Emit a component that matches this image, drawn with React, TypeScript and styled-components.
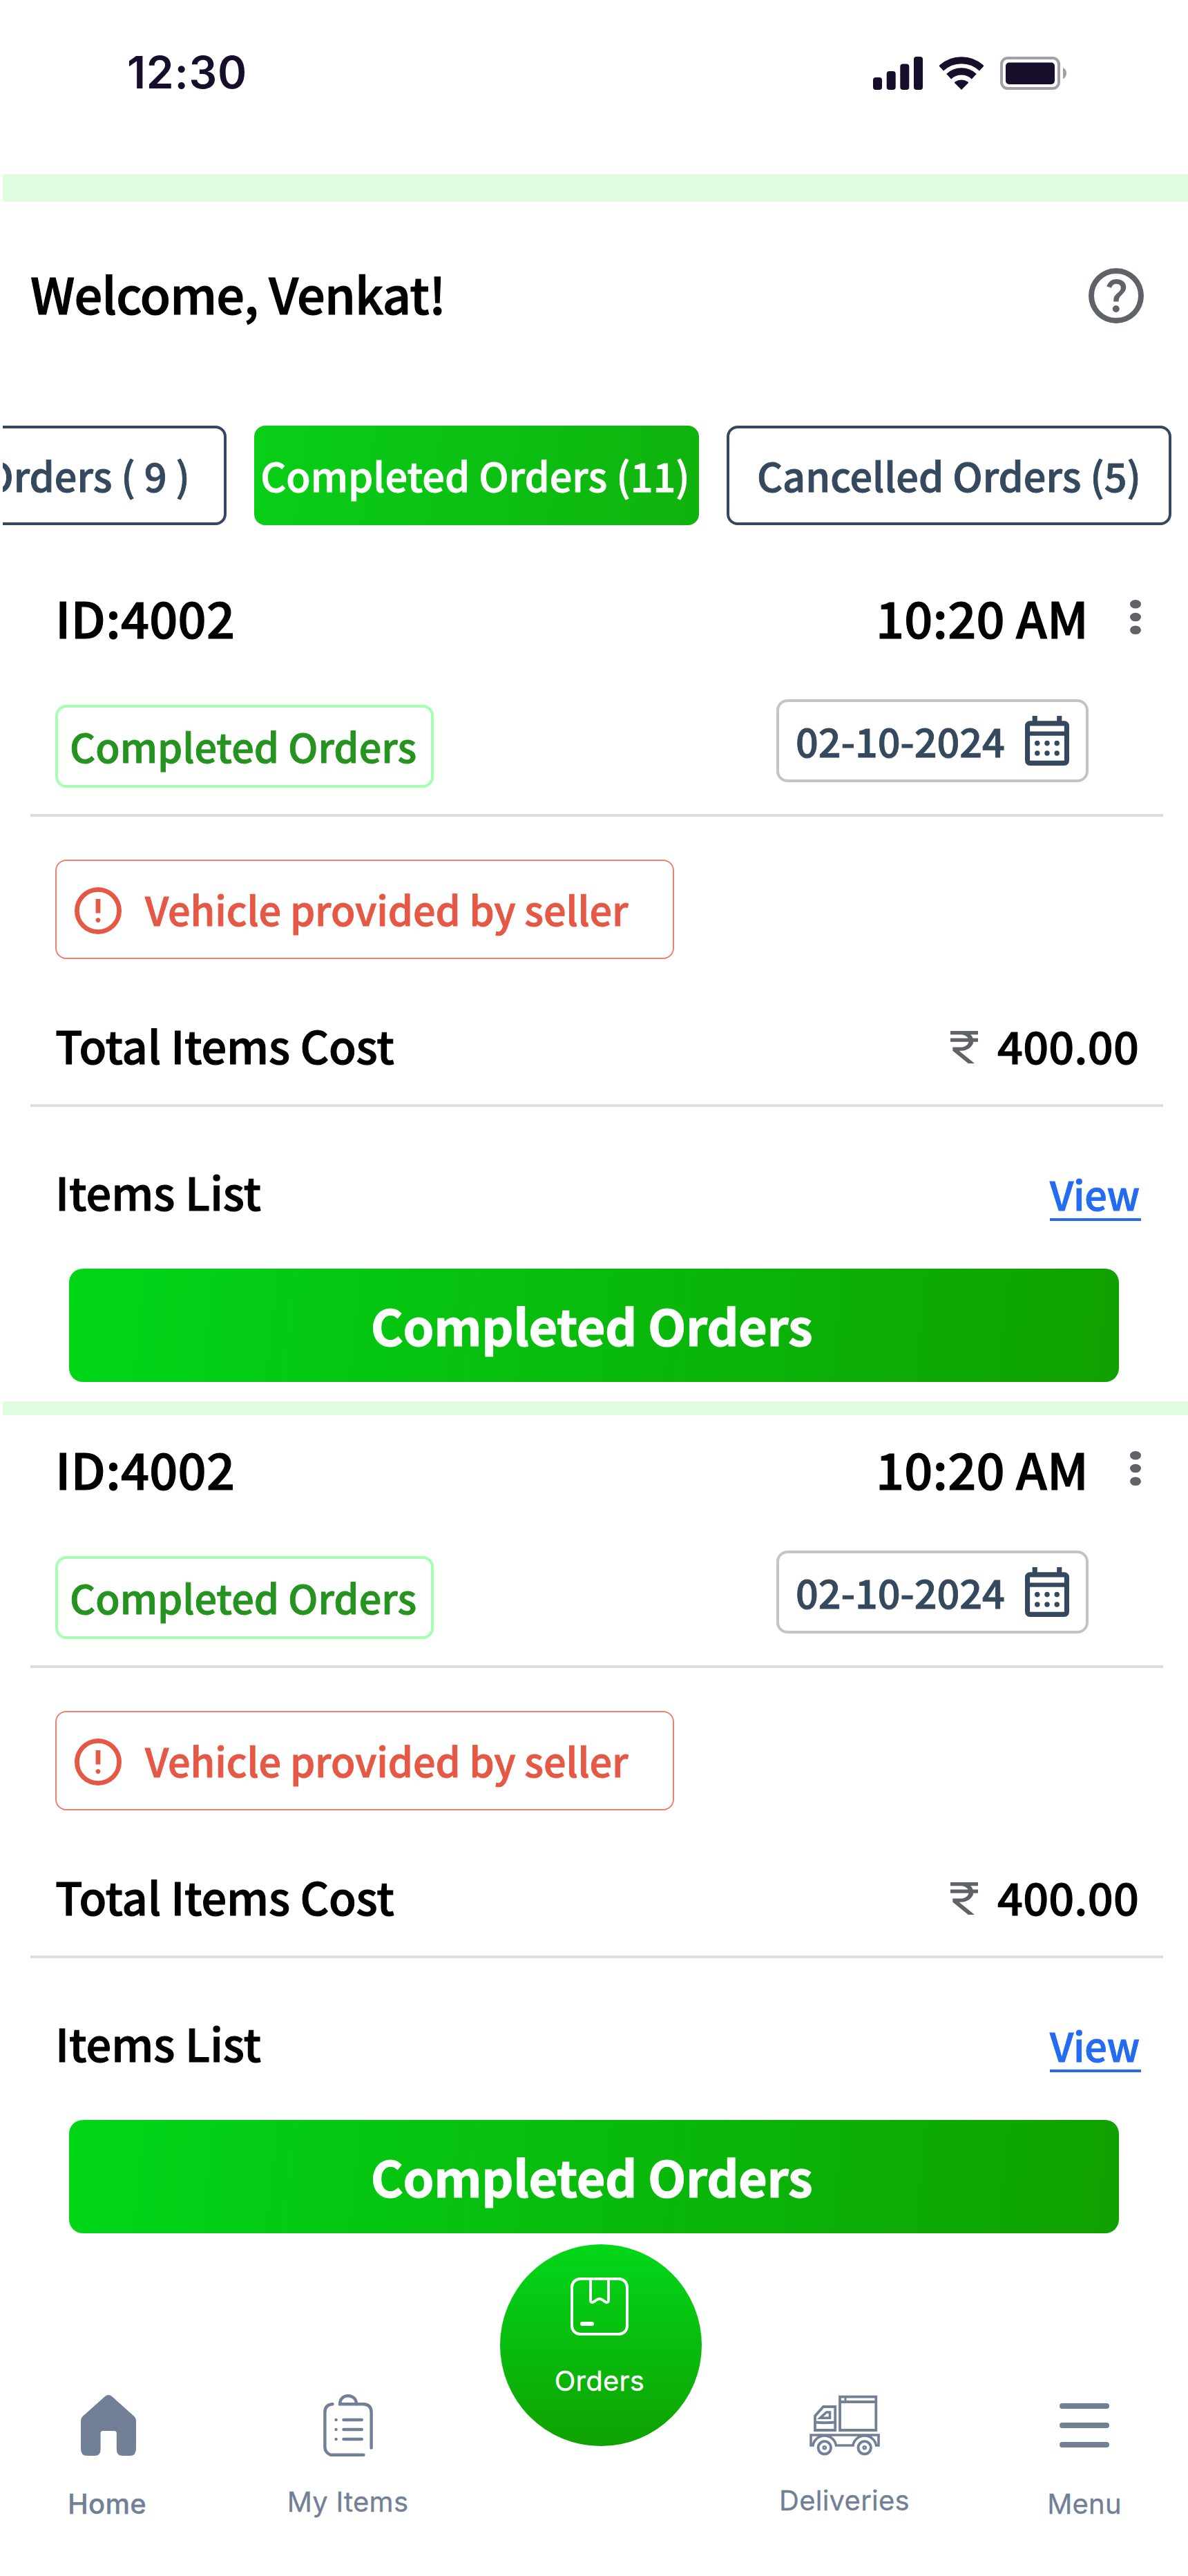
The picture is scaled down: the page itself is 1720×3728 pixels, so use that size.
import React from "react";
import styled, { createGlobalStyle } from "styled-components";

const sans = `"Noto Sans CJK SC", "Noto Sans", sans-serif`;
const ui = `Inter, "Liberation Sans", sans-serif`;

const color = {
  ink: "#000000",
  slate: "#34495e",
  nav: "#718096",
  icon: "#5f6368",
  status: "#170e2b",
  mint: "#e0fedf",
  line: "#dedede",
  warn: "#e45845",
};

const GlobalStyle = createGlobalStyle`
  body { margin: 0; background: #fff; }
  * { box-sizing: border-box; }
  svg { display: block; flex: none; }
  button, a { font: inherit; color: inherit; }
`;

const Screen = styled.main`
  width: 1720px;
  height: 3728px;
  overflow: hidden;
  background: #fff;
  font-family: ${sans};
  font-weight: 500;
  color: ${color.ink};
  display: flex;
  flex-direction: column;
`;

const Text = styled.span<{ $size: number; $track?: number; $line?: number }>`
  font-size: ${(p) => p.$size}px;
  line-height: ${(p) => p.$line ?? 80}px;
  letter-spacing: ${(p) => p.$track ?? 0}px;
  white-space: nowrap;
  -webkit-text-stroke: 0.016em currentColor;
`;

const StatusBar = styled.header`
  height: 252px;
  flex: none;
  padding: 82px 176px 0 184px;
  display: flex;
  justify-content: space-between;
  align-items: flex-start;
  color: ${color.status};
`;

const Clock = styled.time`
  font: 600 64px/46px ${ui};
  letter-spacing: 0.75px;
`;

const StatusIcons = styled.div`
  display: flex;
  gap: 24px;
`;

const Band = styled.div<{ $height: number }>`
  height: ${(p) => p.$height}px;
  flex: none;
  margin-left: 4px;
  background: ${color.mint};
`;

const Greeting = styled.section`
  height: 324px;
  flex: none;
  padding: 96px 64px 0 44px;
  display: flex;
  justify-content: space-between;
  align-items: flex-start;
  color: ${color.ink};
`;

const Tabs = styled.nav`
  height: 144px;
  flex: none;
  margin: 0 0 56px 4px;
  display: flex;
  gap: 40px;
  overflow: hidden;
  justify-content: flex-end;
  padding-right: 24px;
`;

const Tab = styled.button<{ $active?: boolean; $align?: string; $pad?: string }>`
  width: 644px;
  flex: none;
  display: flex;
  align-items: center;
  justify-content: ${(p) => p.$align ?? "center"};
  padding: ${(p) => p.$pad ?? "0 0 2px"};
  border: ${(p) => (p.$active ? "0" : `4px solid ${color.slate}`)};
  border-radius: 16px;
  color: ${(p) => (p.$active ? "#fff" : color.slate)};
  background: ${(p) => (p.$active ? "linear-gradient(98deg, #08cf18, #10b20d)" : "#fff")};
`;

const Card = styled.article<{ $last?: boolean }>`
  flex: none;
  display: flex;
  flex-direction: column;
  padding-bottom: ${(p) => (p.$last ? 0 : 28)}px;
`;

const TitleRow = styled.div`
  height: 153px;
  padding: 0 68px 0 80px;
  display: flex;
  align-items: center;
`;

const TimeGroup = styled.div`
  margin-left: auto;
  display: flex;
  align-items: center;
  gap: 60px;
  color: ${color.ink};
`;

const TagRow = styled.div`
  margin-top: 43px;
  height: 128px;
  padding: 0 144px 0 80px;
  display: flex;
  justify-content: space-between;
  align-items: flex-start;
`;

const Badge = styled.div`
  width: 548px;
  height: 120px;
  margin-top: 8px;
  padding: 0 0 2px 17px;
  display: flex;
  align-items: center;
  border: 4px solid #a6ffb0;
  border-radius: 16px;
  color: #26921f;
`;

const DateBox = styled.div`
  width: 452px;
  height: 120px;
  padding: 0 24px;
  display: flex;
  align-items: center;
  justify-content: space-between;
  border: 4px solid #c4c4c4;
  border-radius: 16px;
  color: ${color.slate};

  span {
    margin-top: -3px;
  }
`;

const Divider = styled.hr<{ $top?: number }>`
  width: 1640px;
  height: 4px;
  margin: ${(p) => p.$top ?? 0}px 0 0 44px;
  border: 0;
  background: ${color.line};
`;

const Notice = styled.div`
  width: 896px;
  height: 144px;
  margin: 62px 0 0 80px;
  padding: 4px 0 0 26px;
  display: flex;
  align-items: center;
  gap: 34px;
  border: 2px solid #ee8072;
  border-radius: 16px;
  color: ${color.warn};

  span {
    margin-top: -7px;
  }
`;

const CostRow = styled.div`
  height: 210px;
  padding: 38px 71px 0 80px;
  display: flex;
  align-items: center;
  justify-content: space-between;
`;

const Amount = styled.div`
  display: flex;
  align-items: center;
  gap: 28px;

  svg {
    margin-top: 7px;
  }
`;

const ListRow = styled.div`
  height: 234px;
  padding: 10px 68px 0 80px;
  display: flex;
  align-items: center;
  justify-content: space-between;
`;

const ViewLink = styled.a`
  width: 132px;
  height: 80px;
  margin-top: 6px;
  display: flex;
  border-bottom: 4px solid #246bf2;
  color: #246bf2;
  text-decoration: none;
`;

const CompleteButton = styled.button`
  width: 1520px;
  height: 164px;
  margin-left: 100px;
  padding: 0 7px 2px 0;
  border: 0;
  border-radius: 20px;
  display: flex;
  align-items: center;
  justify-content: center;
  background: linear-gradient(96deg, #00d618 0%, #08bb0c 50%, #0fa000 100%);
  color: #fff;
  font-weight: 700;
`;

const BottomNav = styled.nav`
  flex: 1;
  padding-left: 15px;
  display: grid;
  grid-template-columns: 280px 417px 313px 395px 300px;
  color: ${color.nav};
  font-family: ${ui};
  font-weight: 400;
`;

const NavItem = styled.div`
  padding-top: 232px;
  display: flex;
  flex-direction: column;
  align-items: center;
`;

const IconSlot = styled.div<{ $shift?: number }>`
  height: 92px;
  padding-left: ${(p) => p.$shift ?? 0}px;
  display: flex;
  align-items: center;
`;

const NavLabel = styled.span<{ $gap: number; $weight?: number }>`
  margin-top: ${(p) => p.$gap}px;
  font-size: 40px;
  font-weight: ${(p) => p.$weight ?? 400};
  line-height: 48px;
  letter-spacing: 0.25px;
  white-space: nowrap;
  -webkit-text-stroke: 0.3px currentColor;
`;

const OrdersButton = styled.div`
  width: 292px;
  height: 292px;
  margin: 16px 0 0 12px;
  padding: 48px 4px 0 0;
  border-radius: 50%;
  display: flex;
  flex-direction: column;
  align-items: center;
  background: linear-gradient(180deg, #02d719, #0fa102);
  color: #fff;
`;

const SignalIcon = () => (
  <svg width="72" height="48" viewBox="0 0 72 48" fill="currentColor">
    <rect x="0" y="30" width="13" height="18" rx="4" />
    <rect x="19.7" y="21" width="13" height="27" rx="4" />
    <rect x="39.3" y="10.4" width="13" height="37.6" rx="4" />
    <rect x="59" y="0" width="13" height="48" rx="4" />
  </svg>
);

const WifiIcon = () => (
  <svg width="64" height="48" viewBox="0 0 64 48" fill="none" stroke="currentColor">
    <path d="M2.6 16.8A43 43 0 0 1 61.4 16.8" strokeWidth="10" />
    <path d="M13.7 28.7A26.6 26.6 0 0 1 50.3 28.7" strokeWidth="10.2" />
    <path d="M32 48L22.3 38.3A1.2 1.2 0 0 1 22.6 36.500A16 16 0 0 1 41.400 36.500A1.2 1.2 0 0 1 41.700 38.300Z" fill="currentColor" stroke="none" />
  </svg>
);

const BatteryIcon = () => (
  <svg width="96" height="48" viewBox="0 0 96 48">
    <rect x="2" y="2" width="83" height="44" rx="9" fill="none" stroke="#a29fab" strokeWidth="4" />
    <rect x="8" y="8.5" width="71" height="31.5" rx="5" fill="currentColor" />
    <path d="M91 16C94.6 17.6 96 20.5 96 24S94.6 30.6 91 32.3Z" fill="#a29fab" />
  </svg>
);

const HelpIcon = () => (
  <svg width="80" height="80" viewBox="80 -880 800 800" fill={color.icon}>
    <path d="M478-240q21 0 35.500-14.500T528-290q0-21-14.500-35.500T478-340q-21 0-35.500 14.500T428-290q0 21 14.500 35.500T478-240Zm-36-154h74q0-33 7.500-52t42.500-52q26-26 41-49.500t15-56.500q0-56-41-86t-97-30q-57 0-92.500 30T342-618l66 26q5-18 22.500-39t53.500-21q32 0 48 17.500t16 38.500q0 20-12 37.500T506-526q-44 39-54 59t-10 73Zm38 314q-83 0-156-31.500T197-197q-54-54-85.500-127T80-480q0-83 31.500-156T197-763q54-54 127-85.500T480-880q83 0 156 31.500T763-763q54 54 85.500 127T880-480q0 83-31.500 156T763-197q-54 54-127 85.500T480-80Zm0-80q134 0 227-93t93-227q0-134-93-227t-227-93q-134 0-227 93t-93 227q0 134 93 227t227 93Z" />
  </svg>
);

const MoreIcon = () => (
  <svg width="16" height="50" viewBox="0 0 16 50" fill={color.icon}>
    <ellipse cx="8" cy="6.300" rx="8" ry="6.300" />
    <ellipse cx="8" cy="25" rx="8" ry="6.300" />
    <ellipse cx="8" cy="43.700" rx="8" ry="6.300" />
  </svg>
);

const CalendarIcon = () => (
  <svg width="64" height="72" viewBox="120 -880 720 800" preserveAspectRatio="none" fill="currentColor">
    <path d="M200-80q-33 0-56.500-23.500T120-160v-560q0-33 23.500-56.500T200-800h40v-80h80v80h320v-80h80v80h40q33 0 56.500 23.500T840-720v560q0 33-23.500 56.500T760-80H200Zm0-80h560v-400H200v400Zm0-470h560v-90H200v90Z" />
    {[320, 480, 640].map((x) => (
      <React.Fragment key={x}>
        <circle cx={x} cy="-440" r="42" />
        <circle cx={x} cy="-280" r="42" />
      </React.Fragment>
    ))}
  </svg>
);

const AlertIcon = () => (
  <svg width="68" height="68" viewBox="80 -880 800 800" fill="currentColor">
    <path d="M480-280q17 0 28.500-11.500T520-320q0-17-11.500-28.500T480-360q-17 0-28.500 11.500T440-320q0 17 11.500 28.500T480-280Zm-40-160h80v-240h-80v240Zm40 360q-83 0-156-31.500T197-197q-54-54-85.500-127T80-480q0-83 31.500-156T197-763q54-54 127-85.500T480-880q83 0 156 31.500T763-763q54 54 85.500 127T880-480q0 83-31.500 156T763-197q-54 54-127 85.500T480-80Zm0-80q134 0 227-93t93-227q0-134-93-227t-227-93q-134 0-227 93t-93 227q0 134 93 227t227 93Z" />
  </svg>
);

const RupeeIcon = () => (
  <svg width="40" height="47" viewBox="6 3 12 18" preserveAspectRatio="none" fill={color.icon}>
    <path d="M13.660 7c-.56-1.180-1.760-2-3.160-2H6V3h12v2h-3.260c.48.58.84 1.260 1.050 2H18v2h-2.020c-.25 2.800-2.610 5-5.480 5h-.73l6.730 7h-2.770L7 14v-2h3.500c1.760 0 3.220-1.300 3.460-3H6V7h7.660z" />
  </svg>
);

const HomeIcon = () => (
  <svg width="80" height="88" viewBox="0 0 80 88" fill="currentColor">
    <path d="M34.800 2.200Q40-2 45.200 2.200L76.800 30.500Q80 33.500 80 38V78Q80 88 71 88H60.500Q51.800 88 51.800 79V55.500Q51.800 52 48.500 52H31.800Q28.600 52 28.600 55.500V79Q28.600 88 20 88H9Q0 88 0 78V38Q0 33.500 3.200 30.500Z" />
  </svg>
);

const ClipboardIcon = () => (
  <svg width="72" height="90" viewBox="0 0 72 90" fill="none" stroke="currentColor" strokeWidth="4.400" strokeLinecap="round" strokeLinejoin="round">
    <path d="M13.500 14.200Q2.400 15 2.400 26V76Q2.400 84.500 10.500 87.700H58.500" />
    <path d="M24 14.200C24 6.500 29.300 2.300 36 2.300S48 6.500 48 14.200" />
    <path d="M24 14.200H58Q69.600 14.600 69.600 26V77.500" />
    {[37, 51, 65].map((y) => (
      <path key={y} d={`M18.500 ${y}H18.600M29.500 ${y}H55.800`} />
    ))}
  </svg>
);

const BoxIcon = () => (
  <svg width="84" height="84" viewBox="0 0 84 84" fill="none" stroke="currentColor" strokeWidth="4">
    <rect x="2" y="2" width="80" height="80" rx="12" />
    <path d="M29 2V33Q29.200 37.500 33.500 35.300L38.600 31.900Q42 29.900 45.400 31.900L50.500 35.300Q54.800 37.500 55 33V2" />
    <path d="M17 67H31" strokeWidth="6" strokeLinecap="round" />
  </svg>
);

const TruckIcon = () => (
  <svg width="102" height="88" viewBox="0 0 102 88" fill="none" stroke="currentColor" strokeWidth="3.800">
    <path d="M44 2.700H96.300V51H44ZM44 10H96.300" />
    <path d="M52 2.700V10" strokeWidth="3" />
    <path d="M37.200 17H20L8 30.500V51H37.200ZM8 39.500Q22 41 37.200 39.500" />
    <path d="M24.500 25H29.500V33.300H15.500Z" strokeWidth="3.600" />
    <path d="M2 58H100V73H96.500A17 17 0 0 0 63 73H38.500A17 17 0 0 0 5 73H2Z" strokeWidth="3.600" />
    <circle cx="21.800" cy="76.300" r="9.200" />
    <circle cx="79.700" cy="76.300" r="9.200" />
    <circle cx="21.800" cy="76.300" r="2" strokeWidth="2.600" />
    <circle cx="79.700" cy="76.300" r="2" strokeWidth="2.600" />
  </svg>
);

const MenuIcon = () => (
  <svg width="72" height="64" viewBox="0 0 72 64" stroke="currentColor" strokeWidth="8" strokeLinecap="round">
    <path d="M4 4H68M4 32H68M4 60H68" />
  </svg>
);

const orders = [
  { id: "4002", time: "10:20 AM", date: "02-10-2024", cost: "400.00" },
  { id: "4002", time: "10:20 AM", date: "02-10-2024", cost: "400.00" },
];

function OrderCard({ order, last }: { order: (typeof orders)[number]; last: boolean }) {
  return (
    <Card $last={last}>
      <TitleRow>
        <Text $size={72} $track={0.3}>ID:{order.id}</Text>
        <TimeGroup>
          <Text $size={72} $track={0.2}>{order.time}</Text>
          <MoreIcon />
        </TimeGroup>
      </TitleRow>
      <TagRow>
        <Badge>
          <Text $size={57.6}>Completed Orders</Text>
        </Badge>
        <DateBox>
          <Text $size={57.6} $track={-0.1}>{order.date}</Text>
          <CalendarIcon />
        </DateBox>
      </TagRow>
      <Divider $top={38} />
      <Notice>
        <AlertIcon />
        <Text $size={57.6} $track={-0.09}>Vehicle provided by seller</Text>
      </Notice>
      <CostRow>
        <Text $size={64.8} $track={-0.15}>Total Items Cost</Text>
        <Amount>
          <RupeeIcon />
          <Text $size={64.8} $track={0.15}>{order.cost}</Text>
        </Amount>
      </CostRow>
      <Divider />
      <ListRow>
        <Text $size={64.8}>Items List</Text>
        <ViewLink>
          <Text $size={57.6} $track={-0.3}>View</Text>
        </ViewLink>
      </ListRow>
      <CompleteButton>
        <Text $size={72} $track={-0.4}>Completed Orders</Text>
      </CompleteButton>
    </Card>
  );
}

export default function App() {
  return (
    <>
      <GlobalStyle />
      <Screen>
        <StatusBar>
          <Clock>12:30</Clock>
          <StatusIcons>
            <SignalIcon />
            <WifiIcon />
            <BatteryIcon />
          </StatusIcons>
        </StatusBar>
        <Band $height={40} />
        <Greeting>
          <Text $size={72} $line={72} $track={-0.8}>Welcome, Venkat!</Text>
          <HelpIcon />
        </Greeting>
        <Tabs>
          <Tab $align="flex-end" $pad="0 49px 2px 0">
            <Text $size={57.6}>Orders ( 9 )</Text>
          </Tab>
          <Tab $active $pad="0 4px 2px 0">
            <Text $size={57.6}>Completed Orders (11)</Text>
          </Tab>
          <Tab>
            <Text $size={57.6}>Cancelled Orders (5)</Text>
          </Tab>
        </Tabs>
        {orders.map((order, i) => (
          <React.Fragment key={i}>
            {i > 0 && <Band $height={20} />}
            <OrderCard order={order} last={i === orders.length - 1} />
          </React.Fragment>
        ))}
        <BottomNav>
          <NavItem>
            <IconSlot $shift={4}><HomeIcon /></IconSlot>
            <NavLabel $gap={44} $weight={500}>Home</NavLabel>
          </NavItem>
          <NavItem>
            <IconSlot><ClipboardIcon /></IconSlot>
            <NavLabel $gap={41}>My Items</NavLabel>
          </NavItem>
          <OrdersButton>
            <BoxIcon />
            <NavLabel $gap={42}>Orders</NavLabel>
          </OrdersButton>
          <NavItem>
            <IconSlot><TruckIcon /></IconSlot>
            <NavLabel $gap={39}>Deliveries</NavLabel>
          </NavItem>
          <NavItem>
            <IconSlot><MenuIcon /></IconSlot>
            <NavLabel $gap={44}>Menu</NavLabel>
          </NavItem>
        </BottomNav>
      </Screen>
    </>
  );
}
